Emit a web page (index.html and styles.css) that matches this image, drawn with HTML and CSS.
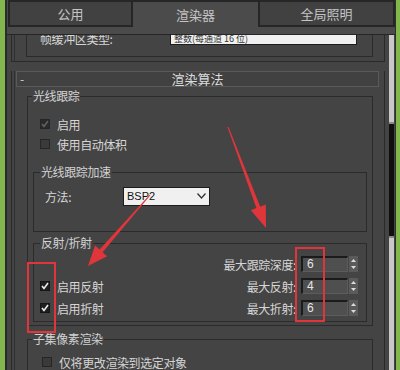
FILE: index.html
```html
<!DOCTYPE html>
<html lang="zh-CN">
<head>
    <meta charset="UTF-8" />
    <title>渲染设置 - 渲染算法</title>
    <link rel="stylesheet" href="styles.css">
</head>
<body>
    <div class="window">
        <div class="edgeLeft"></div>
        <div class="main">
            <div class="tabs">
                <div class="tab">公用</div>
                <div class="tab active">渲染器</div>
                <div class="tab">全局照明</div>
            </div>
            <div class="page">
                <div class="pageBody">
                    <div class="panel">
                        <div class="scroller">
                            <!-- tail of the previous rollout, scrolled mostly out of view -->
                            <div class="rollout prev">
                                <div class="plainGroup">
                                    <div class="row">
                                        <span class="rowLabel">帧缓冲区类型:</span>
                                        <div class="combo wide">整数(每通道 16 位)</div>
                                    </div>
                                </div>
                            </div>

                            <div class="rollout">
                                <div class="rolloutHead">
                                    <span class="minus">-</span>
                                    <span class="headTitle">渲染算法</span>
                                    <span></span>
                                </div>
                                <div class="rolloutBody">
                                    <fieldset class="group">
                                        <legend>光线跟踪</legend>
                                        <div class="check first">
                                            <span class="box dim"><svg width="8" height="8" viewBox="0 0 8 8"><polyline points="1,4 3,6.5 7,1" /></svg></span>
                                            启用
                                        </div>
                                        <div class="check"><span class="box"></span>使用自动体积</div>

                                        <fieldset class="group inner accel">
                                            <legend>光线跟踪加速</legend>
                                            <div class="row">
                                                <span class="methodLabel">方法:</span>
                                                <div class="combo">
                                                    <span>BSP2</span>
                                                    <svg width="9" height="6" viewBox="0 0 9 6"><polyline points="0.5,0.5 4.5,5 8.5,0.5" /></svg>
                                                </div>
                                            </div>
                                        </fieldset>

                                        <fieldset class="group inner refl">
                                            <legend>反射/折射</legend>
                                            <div class="reflGrid">
                                                <div class="reflChecks">
                                                    <div class="check">
                                                        <span class="box on"><svg width="8" height="8" viewBox="0 0 8 8"><polyline points="1,4 3,6.5 7,1" /></svg></span>
                                                        启用反射
                                                    </div>
                                                    <div class="check">
                                                        <span class="box on"><svg width="8" height="8" viewBox="0 0 8 8"><polyline points="1,4 3,6.5 7,1" /></svg></span>
                                                        启用折射
                                                    </div>
                                                </div>
                                                <div class="spins">
                                                    <div class="spinRow">
                                                        <span>最大跟踪深度:</span>
                                                        <span class="spinField">6</span>
                                                        <span class="spinBtn"><svg width="9" height="16" viewBox="0 0 9 16"><polygon points="2,6 4.5,3 7,6" /><polygon points="2,10 4.5,13 7,10" /></svg></span>
                                                    </div>
                                                    <div class="spinRow">
                                                        <span>最大反射:</span>
                                                        <span class="spinField">4</span>
                                                        <span class="spinBtn"><svg width="9" height="16" viewBox="0 0 9 16"><polygon points="2,6 4.5,3 7,6" /><polygon points="2,10 4.5,13 7,10" /></svg></span>
                                                    </div>
                                                    <div class="spinRow">
                                                        <span>最大折射:</span>
                                                        <span class="spinField">6</span>
                                                        <span class="spinBtn"><svg width="9" height="16" viewBox="0 0 9 16"><polygon points="2,6 4.5,3 7,6" /><polygon points="2,10 4.5,13 7,10" /></svg></span>
                                                    </div>
                                                </div>
                                            </div>
                                        </fieldset>
                                    </fieldset>

                                    <fieldset class="group subset">
                                        <legend>子集像素渲染</legend>
                                        <div class="check"><span class="box"></span>仅将更改渲染到选定对象</div>
                                    </fieldset>
                                </div>
                            </div>
                        </div>
                    </div>
                    <div class="scrollbar"><div class="thumb"></div></div>
                </div>
            </div>
        </div>
        <div class="edgeRight"></div>

        <!-- red annotation marks drawn over the screenshot -->
        <svg class="marks" width="400" height="370" viewBox="0 0 400 370">
            <rect x="28" y="263" width="27" height="69" />
            <rect x="296" y="248" width="28" height="73" />
            <polygon class="arrow" points="227.5,127.2 256.4,208.1 250.8,210.2 266,228 265.8,204.6 260.2,206.7 228.5,126.8" />
            <polygon class="arrow" points="150.4,195.3 102.6,252.2 107.1,256.2 88,266 95.1,245.6 99.6,249.6 149.6,194.7" />
        </svg>
    </div>
</body>
</html>
```

FILE: styles.css
```css
html, body {
    height: 100%;
}

body {
    margin: 0;
    background: #444;
    font-family: "Noto Sans CJK SC", "Noto Sans", sans-serif;
    font-size: 12px;
    letter-spacing: -0.4px;
    color: #d6d6d6;
    overflow: hidden;
}

.window {
    position: relative; /* anchor for the red marks */
    display: flex;
    width: 400px;
    height: 370px;
    overflow: hidden;
}

.edgeLeft {
    width: 5px;
    background: #83b64c;
    border-right: 2px solid #2b2b2b;
}

.edgeRight {
    width: 4px;
    background: #83b64c;
    border-left: 1px solid #2f2f2f;
}

.main {
    flex: 1;
    display: flex;
    flex-direction: column;
    min-width: 0;
}

/* tabs */
.tabs {
    display: flex;
    height: 27px;
    padding-left: 1px;
    background: #4b4b4b;
}

.tab {
    width: 125px;
    box-sizing: border-box;
    display: flex;
    align-items: center;
    justify-content: center;
    background: #414141;
    border: 2px solid #262626;
    color: #c4c4c4;
    font-size: 13px;
    letter-spacing: 0;
}

.tab:last-child {
    flex: 1;
}

.tab.active {
    background: #4b4b4b;
    border-left: none;
    border-right: none;
    border-bottom: none;
}

/* tab page */
.page {
    flex: 1;
    display: flex;
    flex-direction: column;
    min-height: 0;
    padding-top: 7px;
    background: #4b4b4b;
}

.pageBody {
    flex: 1;
    display: flex;
    min-height: 0;
    border-top: 1px solid #262626;
    background: #444;
}

.panel {
    width: 381px;
    box-sizing: border-box;
    padding: 0 3px 0 4px;
    overflow: hidden;
}

.scroller {
    margin-top: -11px; /* scrolled down a little */
}

.scrollbar {
    width: 5px;
    margin-left: 1px;
    background: #c8c8c8;
}

.thumb {
    margin-top: 87px;
    height: 112px;
    background: #101010;
    border-top: 2px solid #8a8a8a;
    border-bottom: 2px solid #8a8a8a;
}

/* rollouts */
.rollout {
    border-left: 1px solid #2a2a2a;
    border-right: 1px solid #2a2a2a;
    box-shadow: inset 2px 0 0 #444, inset 3px 0 0 #2f2f2f;
}

.rollout.prev {
    border-bottom: 1px solid #2a2a2a;
    padding: 0 11px 4px 14px;
}

.rollout + .rollout {
    margin-top: 9px;
}

.plainGroup {
    border: 1px solid #2b2b2b;
    padding: 4px 0 9px 13px;
}

.rolloutHead {
    display: grid;
    grid-template-columns: 1fr auto 1fr;
    align-items: center;
    height: 14px;
    margin: 0 5px 0 4px;
    background: #414141;
    border: 1px solid #5a5a5a;
}

.minus {
    padding-left: 3px;
    font-size: 12px;
    line-height: 12px;
    color: #d0d0d0;
}

.headTitle {
    font-size: 13px;
    letter-spacing: 0;
    color: #dcdcdc;
    line-height: 14px;
}

.rolloutBody {
    padding: 2px 11px 0 15px;
}

/* group boxes */
fieldset.group {
    margin: 0;
    min-width: 0;
    border: 1px solid #2b2b2b;
    padding: 0 5px 3px 5px;
}

fieldset.group legend {
    padding: 0 1px;
    margin-left: -1px;
    line-height: 14px;
    color: #d2d2d2;
}

fieldset.inner {
    padding: 0 6px 0 6px;
}

fieldset.inner legend {
    margin-left: 0;
}

fieldset.accel {
    margin-top: 11px;
    padding-top: 7px;
    padding-bottom: 25px;
}

fieldset.refl {
    margin-top: 4px;
    padding-top: 3px;
    padding-bottom: 2px;
}

fieldset.subset {
    margin-top: 6px;
    padding-top: 6px;
}

/* rows */
.row {
    display: flex;
    align-items: center;
    height: 18px;
}

.accel .row {
    height: 20px;
}

.rowLabel {
    width: 130px;
}

.methodLabel {
    width: 78px;
    margin-left: 5px;
}

.combo {
    display: flex;
    align-items: center;
    justify-content: space-between;
    box-sizing: border-box;
    width: 87px;
    height: 19px;
    padding: 0 3px 0 3px;
    background: #f0f0f0;
    border: 1px solid #1c1c1c;
    color: #111;
    font-family: "Liberation Sans", Arial, sans-serif;
    font-size: 11px;
    letter-spacing: 0;
}

.combo svg polyline {
    fill: none;
    stroke: #333;
    stroke-width: 1.3;
}

.combo.wide {
    width: 187px;
    height: 14px;
    font-family: "Noto Sans CJK SC", sans-serif;
    font-size: 9px;
    color: #333;
}

/* checkboxes */
.check {
    display: flex;
    align-items: center;
    height: 20px;
    padding-left: 7px;
}

.check.first {
    margin-top: 11px;
}

.box {
    display: flex;
    align-items: center;
    justify-content: center;
    box-sizing: border-box;
    width: 10px;
    height: 10px;
    margin-right: 7px;
    background: #3a3a3a;
    border: 1px solid #262626;
}

.box svg polyline {
    fill: none;
    stroke-width: 1.6;
}

.box.dim {
    background: #2a2a2a;
}

.box.dim svg polyline {
    stroke: #606060;
}

.box.on {
    background: #1f1f1f;
    border-color: #151515;
}

.box.on svg polyline {
    stroke: #eaeaea;
}

.subset .check {
    padding-left: 9px;
}

/* reflections / refractions */
.reflGrid {
    display: flex;
    justify-content: space-between;
}

.reflChecks {
    padding-top: 22px;
}

.reflChecks .check {
    height: 22px;
    padding-left: 0;
}

.spins {
    margin-right: 2px;
}

.spinRow {
    display: flex;
    align-items: center;
    justify-content: flex-end;
    height: 22px;
}

.spinField {
    box-sizing: border-box;
    width: 47px;
    height: 16px;
    margin-left: 5px;
    padding-left: 4px;
    background: #4f4f4f;
    border-top: 2px solid #1b1b1b;
    border-left: 2px solid #1b1b1b;
    border-right: 1px solid #5c5c5c;
    border-bottom: 1px solid #5c5c5c;
    color: #e6e6e6;
    font-family: "Liberation Sans", Arial, sans-serif;
    font-size: 12px;
    line-height: 13px;
    letter-spacing: 0;
}

.spinBtn {
    display: block;
    width: 9px;
    height: 16px;
    margin-left: 1px;
    background: #5a5a5a;
}

.spinBtn svg {
    display: block;
}

.spinBtn polygon {
    fill: #dcdcdc;
}

/* annotation overlay */
.marks {
    position: absolute;
    left: 0;
    top: 0;
    pointer-events: none;
}

.marks rect {
    fill: none;
    stroke: #e0353b;
    stroke-width: 2;
}

.marks .arrow {
    fill: #e0353b;
}
```
